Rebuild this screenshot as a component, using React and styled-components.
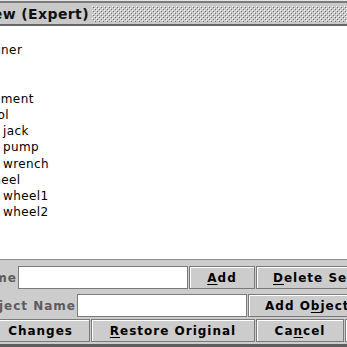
import React from "react";
import styled, { createGlobalStyle } from "styled-components";

const GlobalStyle = createGlobalStyle`
  html, body {
    margin: 0;
    padding: 0;
    overflow: hidden;
    background: #cccccc;
  }
  body {
    font-family: "DejaVu Sans", "Liberation Sans", sans-serif;
  }
`;

const Window = styled.div`
  width: 347px;
  display: flex;
  flex-direction: column;
  background: #cccccc;
  border-top: 1px solid #e6e6e6;
  border-bottom: 3px solid #5e5e5e;
  overflow: hidden;
`;

const TitleBar = styled.div`
  height: 21px;
  display: flex;
  align-items: center;
  background: #c9c9c9;
  border-top: 2px solid #7b7b7b;
  border-bottom: 2px solid #666666;
`;

const Clip = styled.div`
  width: ${(p) => p.$w}px;
  flex: none;
  overflow: hidden;
  display: flex;
  justify-content: flex-end;
  align-items: center;
`;

const TitleText = styled.span`
  flex: none;
  font-weight: bold;
  font-size: 14px;
  letter-spacing: 0.4px;
  color: #111;
  white-space: nowrap;
`;

const Bumps = styled.div`
  flex: 1;
  height: 16px;
  margin: 0 0 0 3px;
  svg {
    display: block;
  }
`;

const List = styled.div`
  height: 233px;
  background: #ffffff;
  overflow: hidden;
`;

const Tree = styled.div`
  margin-left: -60px;
`;

const TreeRow = styled.div`
  height: 16.2px;
  line-height: 16.2px;
  padding-left: ${(p) => p.$indent}px;
  font-size: 12px;
  letter-spacing: 0.4px;
  color: #000;
  white-space: nowrap;
`;

const Panel = styled.div`
  border-top: 1px solid #8c8c8c;
  padding: 6px 0 2px;
  display: flex;
  flex-direction: column;
`;

const Form = styled.div`
  display: flex;
  flex-direction: column;
  gap: 5px;
`;

const Row = styled.div`
  height: 23px;
  display: flex;
  gap: 1px;
  margin-top: ${(p) => p.$mt || 0}px;
`;

const Label = styled.span`
  flex: none;
  font-weight: bold;
  font-size: 12px;
  letter-spacing: 1px;
  color: #5c5c5c;
  white-space: nowrap;
`;

const Field = styled.input`
  width: 170px;
  height: 23px;
  box-sizing: border-box;
  flex: none;
  margin: 0;
  border: 1px solid #7a7a7a;
  background: #ffffff;
  outline: none;
  padding: 0 3px;
  font-size: 12px;
`;

const Button = styled.button`
  flex: none;
  height: 23px;
  box-sizing: border-box;
  ${(p) => (p.$w ? `width: ${p.$w}px;` : "")}
  padding: 0 16px;
  margin: 0;
  border: 1px solid #7a7a7a;
  box-shadow: inset 1px 1px 0 #ffffff;
  background: #cccccc;
  font-family: "DejaVu Sans", "Liberation Sans", sans-serif;
  font-weight: bold;
  font-size: 12px;
  letter-spacing: 1px;
  word-spacing: ${(p) => p.$ws || 0}px;
  color: #000;
  white-space: nowrap;
  u {
    text-underline-offset: 2px;
  }
`;

const tree = [
  { text: "Scene", indent: 0 },
  { text: "Container", indent: 20 },
  { text: "Crate", indent: 20 },
  { text: "Box", indent: 20 },
  { text: "Equipment", indent: 25 },
  { text: "Tool", indent: 44 },
  { text: "jack", indent: 63 },
  { text: "pump", indent: 63 },
  { text: "wrench", indent: 63 },
  { text: "Wheel", indent: 41 },
  { text: "wheel1", indent: 63 },
  { text: "wheel2", indent: 63 },
];

const MetalBumps = () => (
  <svg width="100%" height="100%">
    <defs>
      <pattern id="bumps" width="4" height="4" patternUnits="userSpaceOnUse">
        <rect x="0" y="0" width="1" height="1" fill="#ffffff" />
        <rect x="1" y="1" width="1" height="1" fill="#6e6e6e" />
        <rect x="2" y="2" width="1" height="1" fill="#ffffff" />
        <rect x="3" y="3" width="1" height="1" fill="#6e6e6e" />
      </pattern>
    </defs>
    <rect width="100%" height="100%" fill="url(#bumps)" />
  </svg>
);

export default function App() {
  return (
    <>
      <GlobalStyle />
      <Window>
        <TitleBar>
          <Clip $w={89}>
            <TitleText>Object View (Expert)</TitleText>
          </Clip>
          <Bumps>
            <MetalBumps />
          </Bumps>
        </TitleBar>

        <List>
          <Tree>
            {tree.map((n, i) => (
              <TreeRow key={i} $indent={n.indent}>
                {n.text}
              </TreeRow>
            ))}
          </Tree>
        </List>

        <Panel>
          <Form>
            <Row>
              <Clip $w={17}>
                <Label>Name</Label>
              </Clip>
              <Field />
              <Button $w={66}>
                <u>A</u>dd
              </Button>
              <Button>
                <u>D</u>elete Selected
              </Button>
            </Row>
            <Row>
              <Clip $w={76}>
                <Label>Object Name</Label>
              </Clip>
              <Field />
              <Button>
                Add O<u>b</u>ject
              </Button>
            </Row>
          </Form>
          <Row $mt={2}>
            <Clip $w={90}>
              <Button $ws={4}>Apply Changes</Button>
            </Clip>
            <Button $w={164}>
              <u>R</u>estore Original
            </Button>
            <Button $w={88}>
              Ca<u>n</u>cel
            </Button>
            <Button>
              <u>H</u>elp
            </Button>
          </Row>
        </Panel>
      </Window>
    </>
  );
}
